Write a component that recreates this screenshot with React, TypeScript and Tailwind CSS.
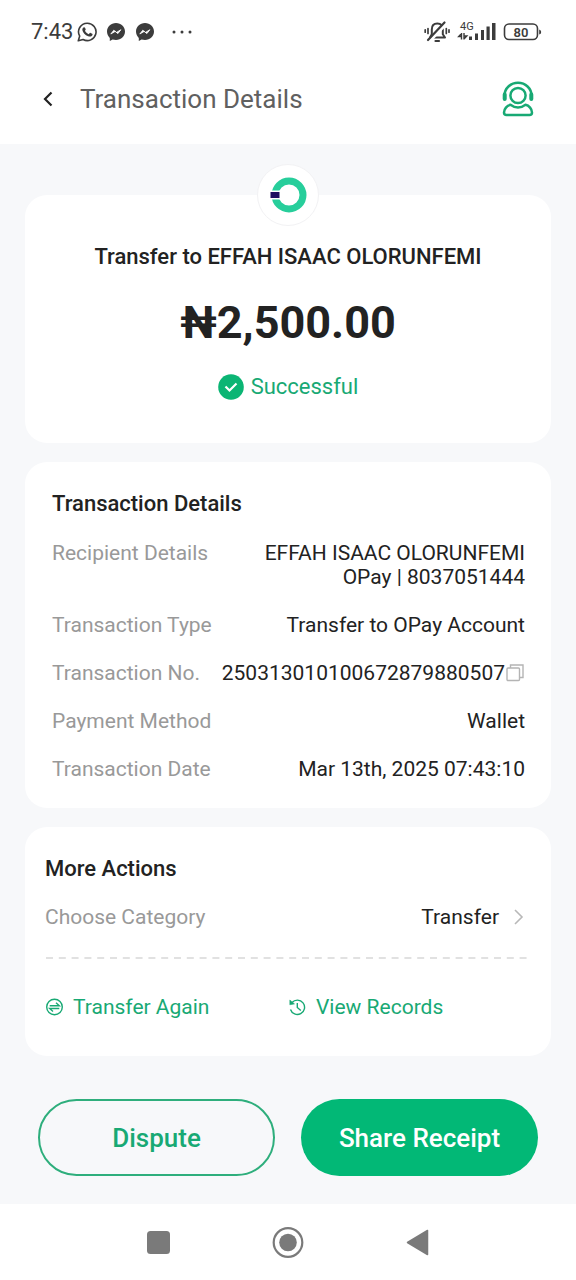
import type { ReactNode } from "react"
import { clsx } from "clsx"

function MessengerIcon() {
  return (
    <svg viewBox="0 0 20 20" className="h-5 w-5" aria-hidden="true">
      <path
        d="M10 1C4.900 1 1 4.700 1 9.600c0 2.600 1.100 4.800 2.800 6.300v3l2.800-1.500c1 .3 2.200.5 3.400.5 5.100 0 9-3.700 9-8.400S15.100 1 10 1Z"
        fill="#3c3c3c"
      />
      <path
        d="m4.800 12 3-3.800 2.700 2.200 4.400-2.700-3 3.900-2.700-2.200L4.800 12Z"
        fill="#fff"
        stroke="#fff"
        strokeWidth="0.8"
        strokeLinejoin="round"
      />
    </svg>
  )
}

function WhatsAppIcon() {
  return (
    <svg viewBox="0 0 20 20" className="h-5 w-5" aria-hidden="true">
      <path
        d="M10.200 1.200a8.600 8.600 0 0 0-7.500 12.900L1.300 18.800l4.800-1.300A8.700 8.700 0 1 0 10.200 1.200Z"
        fill="none"
        stroke="#3c3c3c"
        strokeWidth="1.600"
        strokeLinejoin="round"
      />
      <path
        d="M6.500 5.500c.6-.5 1.200-.4 1.500.2l.7 1.600c.1.300-.1.700-.7 1.400.9 1.700 2 2.700 3.700 3.500l1.100-1.200c.3-.3.500-.2.800-.1l1.600.8c.5.300.4 1 .1 1.600-.7 1.200-2.300 1.600-4.200.9-3-1-5.200-3.500-5.700-6-.2-1.200.3-2.100 1.100-2.700Z"
        fill="#3c3c3c"
      />
    </svg>
  )
}

function MutedBellIcon() {
  return (
    <svg viewBox="0 0 26 24" className="h-6 w-[26px]" fill="none" stroke="#3c3c3c" strokeLinecap="round" aria-hidden="true">
      <path d="M6 17.500h15l-2.200-3.200V9.500c0-3.700-2.200-6-5.500-6s-5.500 2.300-5.500 6v4.800L6 17.500Z" strokeWidth="2" strokeLinejoin="round" />
      <path d="M11.500 21h3.500" strokeWidth="2.200" />
      <path d="M5.500 21.500 22 4" stroke="#fff" strokeWidth="3" strokeLinecap="butt" />
      <path d="M4 20 20.500 2.500" strokeWidth="2.200" />
      <path d="M4 8.500v5M1.200 9.800v2.400M22.300 8.500v5M25 9.800v2.400" strokeWidth="1.700" />
    </svg>
  )
}

function SignalIcon() {
  return (
    <svg viewBox="0 0 40 24" className="h-6 w-10" fill="#3c3c3c" aria-hidden="true">
      <text x="4" y="10" fontSize="11" fontFamily="Roboto, sans-serif">4G</text>
      <path d="M5.500 13v6.500M5.500 13.500l-2.800 3h2.800M8 19.500V13M8 19l2.800-3H8" fill="none" stroke="#3c3c3c" strokeWidth="1.400" />
      <rect x="13" y="16.500" width="3" height="3.500" />
      <rect x="19" y="13.500" width="3" height="6.500" />
      <rect x="25" y="10" width="3" height="10" />
      <rect x="30.500" y="6.500" width="3.200" height="13.500" />
      <rect x="36" y="3" width="3.500" height="17" />
    </svg>
  )
}

function BatteryIcon() {
  return (
    <svg viewBox="0 0 40 20" className="h-5 w-10" aria-hidden="true">
      <rect x="2.500" y="2" width="33" height="15.500" rx="4.500" fill="none" stroke="#3c3c3c" strokeWidth="1.600" />
      <path d="M37.200 7.500v5q2-.5 2-2.500t-2-2.500Z" fill="#3c3c3c" />
      <text x="19" y="14.500" textAnchor="middle" fontSize="13" fontWeight="600" fontFamily="Roboto, sans-serif" fill="#3c3c3c">
        80
      </text>
    </svg>
  )
}

function StatusBar() {
  return (
    <div className="flex h-16 items-center justify-between pr-[34px] pl-[31px]">
      <div className="flex items-center">
        <span className="text-[22px] leading-6 text-[#3c3c3c]">7:43</span>
        <span className="ml-1 flex items-center gap-[9px]">
          <WhatsAppIcon />
          <MessengerIcon />
          <MessengerIcon />
        </span>
        <svg viewBox="0 0 22 4" className="ml-4 h-1 w-[22px]" fill="#3c3c3c" aria-hidden="true">
          <circle cx="3" cy="2" r="1.500" />
          <circle cx="11" cy="2" r="1.500" />
          <circle cx="19" cy="2" r="1.500" />
        </svg>
      </div>
      <div className="flex items-center gap-[6px]">
        <MutedBellIcon />
        <SignalIcon />
        <BatteryIcon />
      </div>
    </div>
  )
}

function Header() {
  return (
    <header className="flex h-20 items-center bg-white pr-10 pb-[10px] pl-9">
      <button type="button" aria-label="Back" className="flex h-6 w-6 items-center justify-center">
        <svg viewBox="0 0 12 16" className="h-4 w-3" fill="none" stroke="#222" strokeWidth="2.200" aria-hidden="true">
          <path d="M9.500 1.500 3 8l6.500 6.500" />
        </svg>
      </button>
      <h1 className="ml-5 text-[26px] leading-8 text-[#606060]">Transaction Details</h1>
      <button type="button" aria-label="Customer support" className="ml-auto">
        <svg viewBox="0 0 36 36" className="h-9 w-9" fill="none" stroke="#18a974" strokeWidth="2.500" strokeLinecap="round" strokeLinejoin="round" aria-hidden="true">
          <path d="M4.500 18v-3.500a13.500 12.700 0 0 1 27 0V18" />
          <path d="M4.700 13.500V18M31.300 13.500V18" strokeWidth="4" />
          <circle cx="18" cy="14.500" r="7.600" />
          <path d="M10.500 23.800C7 24.500 4 28 4 31.500c0 1.700.8 2.500 2.500 2.500h23c1.700 0 2.500-.8 2.500-2.500 0-3.500-3-7-6.500-7.700-4.700 3.500-10.300 3.500-15 0Z" />
        </svg>
      </button>
    </header>
  )
}

function Card({ className, children }: { className?: string; children: ReactNode }) {
  return <section className={clsx("rounded-[22px] bg-white", className)}>{children}</section>
}

function OPayLogo() {
  return (
    <div className="absolute -top-[31px] left-1/2 flex h-[62px] w-[62px] -translate-x-1/2 items-center justify-center rounded-full border border-[#f2f2f4] bg-white">
      <svg viewBox="0 0 38 38" className="h-[38px] w-[38px]" aria-label="OPay" role="img">
        <circle cx="20" cy="19" r="14" fill="none" stroke="#27ce9b" strokeWidth="7" />
        <rect x="0" y="14.500" width="11.500" height="9" fill="#fff" />
        <rect x="1.500" y="16" width="9" height="6" fill="#1d0f60" />
      </svg>
    </div>
  )
}

function Summary() {
  return (
    <Card className="relative flex flex-col items-center pt-[50px] pb-[42px]">
      <OPayLogo />
      <h2 className="text-[22px] leading-6 font-medium text-[#222]">Transfer to EFFAH ISAAC OLORUNFEMI</h2>
      <p className="mt-7 text-[45px] leading-[52px] font-bold text-[#222]">₦2,500.00</p>
      <p className="mt-6 flex items-center gap-[7px] text-[22px] leading-7 text-[#18a974]">
        <svg viewBox="0 0 26 26" className="h-[26px] w-[26px]" aria-hidden="true">
          <circle cx="13" cy="13" r="12.800" fill="#0bb574" />
          <path d="m7.500 12.500 4 4 7-7" fill="none" stroke="#fff" strokeWidth="2.200" />
        </svg>
        Successful
      </p>
    </Card>
  )
}

function DetailRow({ label, children }: { label: string; children: ReactNode }) {
  return (
    <div className="flex justify-between">
      <dt className="text-[#999]">{label}</dt>
      <dd className="text-right text-[#222]">{children}</dd>
    </div>
  )
}

function Details() {
  return (
    <Card className="pt-[30px] pr-[26px] pb-[27px] pl-[27px]">
      <h2 className="text-[22px] leading-6 font-medium text-[#222]">Transaction Details</h2>
      <dl className="mt-[25px] flex flex-col gap-6 text-[21px] leading-6">
        <DetailRow label="Recipient Details">
          EFFAH ISAAC OLORUNFEMI
          <br />
          OPay | 8037051444
        </DetailRow>
        <DetailRow label="Transaction Type">Transfer to OPay Account</DetailRow>
        <DetailRow label="Transaction No.">
          <span className="flex items-center">
            250313010100672879880507
            <button type="button" aria-label="Copy transaction number">
              <svg viewBox="0 0 20 20" className="h-5 w-5" fill="none" stroke="#b4b4b4" strokeWidth="1.400" aria-hidden="true">
                <rect x="2" y="5" width="12.500" height="12.500" rx="1" />
                <path d="M5.500 5V2H18v12.500h-3.500" />
              </svg>
            </button>
          </span>
        </DetailRow>
        <DetailRow label="Payment Method">Wallet</DetailRow>
        <DetailRow label="Transaction Date">Mar 13th, 2025 07:43:10</DetailRow>
      </dl>
    </Card>
  )
}

function MoreActions() {
  return (
    <Card className="pt-[30px] pr-6 pb-[37px] pl-5">
      <h2 className="text-[22px] leading-6 font-medium text-[#222]">More Actions</h2>
      <button type="button" className="mt-6 flex w-full items-center justify-between text-[21px] leading-6">
        <span className="text-[#999]">Choose Category</span>
        <span className="flex items-center gap-3 text-[#222]">
          Transfer
          <svg viewBox="0 0 16 18" className="h-[18px] w-4" fill="none" stroke="#b8b8b8" strokeWidth="1.600" aria-hidden="true">
            <path d="m4 2 7 7-7 7" />
          </svg>
        </span>
      </button>
      <svg className="mt-7 h-[2px] w-full" aria-hidden="true">
        <line x1="1" y1="1" x2="100%" y2="1" stroke="#d8d8d8" strokeWidth="1.500" strokeDasharray="7 5.800" />
      </svg>
      <div className="mt-9 grid grid-cols-2 gap-x-1 text-[21px] leading-6 text-[#18a974]">
        <button type="button" className="flex items-center gap-[10px]">
          <svg viewBox="0 0 18 18" className="h-[18px] w-[18px]" fill="none" stroke="currentColor" strokeWidth="1.400" aria-hidden="true">
            <circle cx="9.500" cy="9" r="7.800" />
            <path d="M4.700 7.700h9.600l-3.300-3M14.300 10.500H4.700l3.300 3" />
          </svg>
          Transfer Again
        </button>
        <button type="button" className="flex items-center gap-[10px]">
          <svg viewBox="0 0 18 18" className="h-[18px] w-[18px]" fill="none" stroke="currentColor" strokeWidth="1.400" aria-hidden="true">
            <path d="M4 4.500A7.200 7.200 0 1 1 2.500 11.500" />
            <path d="M1.800 2v4.800l4.700-.9Z" fill="currentColor" strokeWidth="0.500" />
            <path d="M9.300 5v4.500l3.500 3" />
          </svg>
          View Records
        </button>
      </div>
    </Card>
  )
}

function NavigationBar() {
  return (
    <nav className="flex h-[76px] items-center justify-center gap-[98px] bg-white">
      <button type="button" aria-label="Recent apps">
        <svg viewBox="0 0 32 32" className="h-8 w-8" aria-hidden="true">
          <rect x="5" y="5" width="23" height="23" rx="3.500" fill="#7a7a7a" />
        </svg>
      </button>
      <button type="button" aria-label="Home">
        <svg viewBox="0 0 32 32" className="h-8 w-8" aria-hidden="true">
          <circle cx="16" cy="16.500" r="14.300" fill="none" stroke="#7a7a7a" strokeWidth="2.200" />
          <circle cx="16" cy="16.500" r="8.800" fill="#7a7a7a" />
        </svg>
      </button>
      <button type="button" aria-label="Back to previous screen">
        <svg viewBox="0 0 32 32" className="h-8 w-8" aria-hidden="true">
          <path d="M5.500 16.500 25.500 4.500v24Z" fill="#7a7a7a" stroke="#7a7a7a" strokeWidth="1.500" strokeLinejoin="round" />
        </svg>
      </button>
    </nav>
  )
}

export default function App() {
  return (
    <div className="flex min-h-screen flex-col bg-[#f7f8fa] font-['Roboto',sans-serif]">
      <div className="bg-white">
        <StatusBar />
        <Header />
      </div>
      <main className="flex flex-1 flex-col gap-[19px] px-[25px] pt-[51px] pb-7">
        <Summary />
        <Details />
        <MoreActions />
        <div className="mt-6 grid grid-cols-2 gap-[26px] px-[13px] text-[26px] leading-8 font-medium">
          <button type="button" className="h-[77px] rounded-full border-2 border-[#2eae7c] text-[#18a974]">
            Dispute
          </button>
          <button type="button" className="h-[77px] rounded-full bg-[#02b876] text-white">
            Share Receipt
          </button>
        </div>
      </main>
      <NavigationBar />
    </div>
  )
}
